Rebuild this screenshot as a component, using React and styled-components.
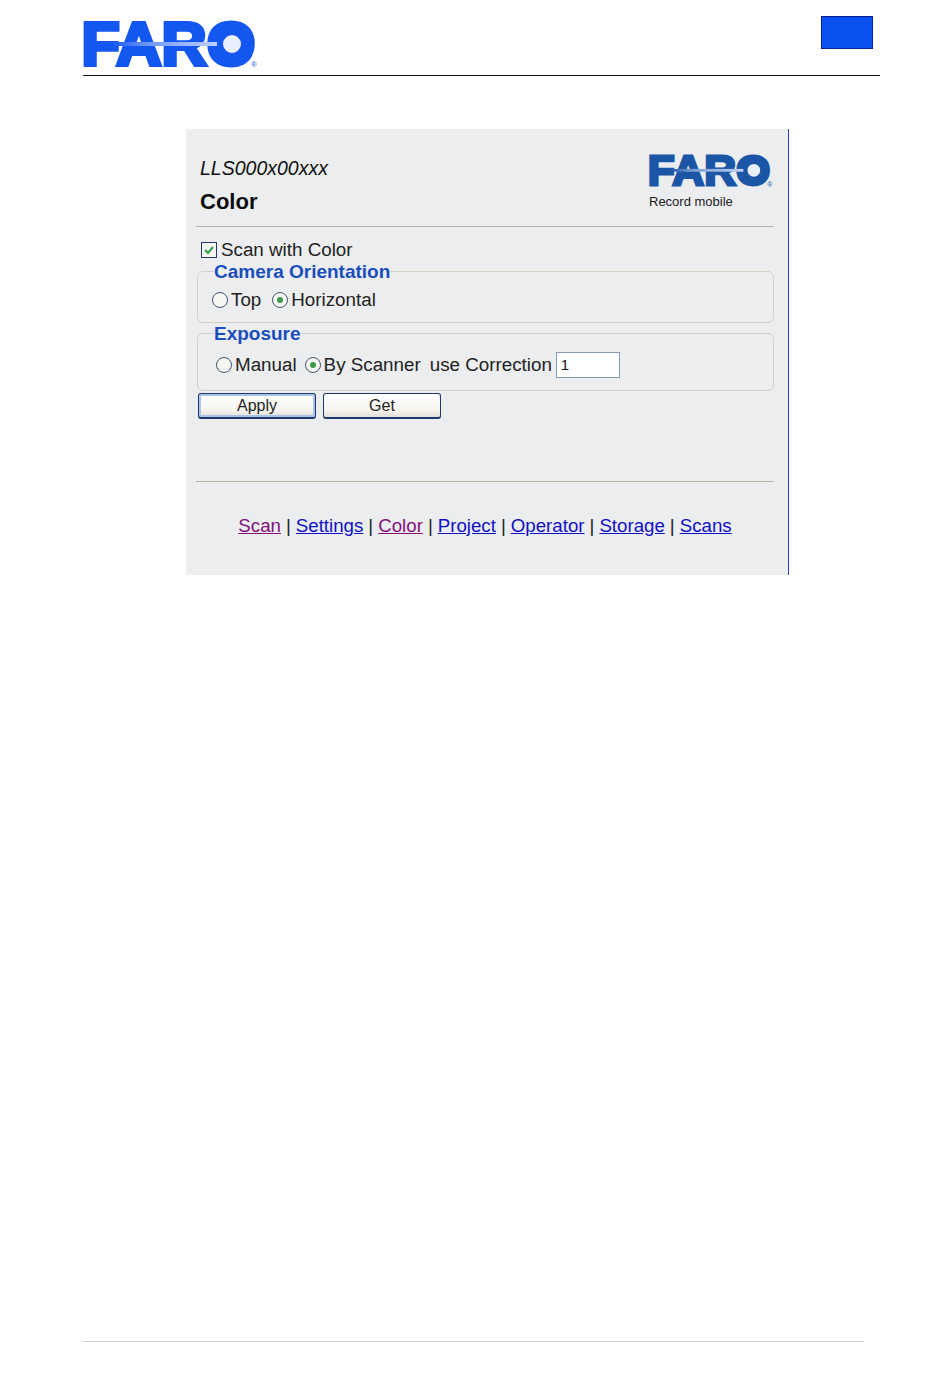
import React from "react";
import styled, { createGlobalStyle } from "styled-components";

const GlobalStyle = createGlobalStyle`
  html, body {
    margin: 0;
    padding: 0;
    background: #fff;
    font-family: "Liberation Sans", Arial, sans-serif;
  }
`;

const Page = styled.div`
  display: flex;
  flex-direction: column;
  width: 950px;
  height: 1379px;
  box-sizing: border-box;
`;
const Header = styled.header`
  display: flex;
  justify-content: space-between;
  align-items: flex-start;
  box-sizing: border-box;
  width: 797px;
  height: 76px;
  margin-left: 83px;
  border-bottom: 1px solid #111;
`;
const HeaderLogo = styled.div`
  margin: 18px 0 0 -4px;
  line-height: 0;
`;
const ChapterBox = styled.div`
  width: 52px;
  height: 33px;
  margin: 16px 7px 0 0;
  box-sizing: border-box;
  background: #0a52f0;
  border: 1px solid #0a1f90;
`;
const Panel = styled.main`
  align-self: flex-start;
  box-sizing: border-box;
  width: 603px;
  height: 446px;
  margin: 53px 0 0 186px;
  padding: 0 14px 0 10px;
  background: #ebedef;
  border-right: 1px solid #1d47c4;
`;
const PanelTop = styled.div`
  display: flex;
  justify-content: space-between;
  box-sizing: border-box;
  height: 98px;
  border-bottom: 1px solid #b5b2a6;
`;
const TitleBlock = styled.div`
  padding: 27px 0 0 4px;
`;
const Serial = styled.div`
  font-size: 19.5px;
  font-style: italic;
  line-height: 24px;
  color: #111;
`;
const PageTitle = styled.h1`
  margin: 10px 0 0;
  font-size: 22px;
  font-weight: 700;
  line-height: 24px;
  color: #0c0c0c;
`;
const Brand = styled.div`
  display: flex;
  flex-direction: column;
  width: 125px;
  padding-top: 23px;
  line-height: 0;
`;
const BrandLogo = styled.div`
  margin-left: -3px;
`;
const BrandCaption = styled.div`
  margin-top: 6px;
  font-size: 13px;
  line-height: 13px;
  color: #222;
`;
const ColorRow = styled.label`
  display: flex;
  align-items: center;
  gap: 4px;
  height: 23px;
  margin: 11px 0 0 5px;
  font-size: 18.8px;
  color: #222;
`;
const CheckBox = styled.span`
  display: flex;
  align-items: center;
  justify-content: center;
  box-sizing: border-box;
  width: 16px;
  height: 16px;
  background: #f4f6f2;
  border: 1px solid #24386a;
`;
const Group = styled.fieldset`
  box-sizing: border-box;
  width: 577px;
  height: ${(p) => p.$height}px;
  margin: 0 0 0 1px;
  padding: 0;
  border: 1px solid #d3d1c6;
  border-radius: 6px;
`;
const Legend = styled.legend`
  margin-left: 16px;
  padding: 0;
  font-size: 19px;
  font-weight: 700;
  line-height: 21px;
  color: #1a4dbd;
`;
const Options = styled.div`
  display: flex;
  align-items: center;
  height: ${(p) => p.$height}px;
  padding-left: ${(p) => p.$inset}px;
  font-size: 18.8px;
  color: #222;
`;
const Option = styled.span`
  display: flex;
  align-items: center;
  gap: 3px;
  margin-right: ${(p) => p.$gap}px;
`;
const Radio = styled.span`
  display: flex;
  align-items: center;
  justify-content: center;
  box-sizing: border-box;
  width: 16px;
  height: 16px;
  background: #f6f6f2;
  border: 1px solid #45556a;
  border-radius: 50%;
  &::after {
    content: "";
    display: ${(p) => (p.$on ? "block" : "none")};
    width: 6px;
    height: 6px;
    border-radius: 50%;
    background: #3d9a48;
  }
`;
const Correction = styled.span`
  margin-left: 9px;
`;
const ValueBox = styled.div`
  box-sizing: border-box;
  width: 64px;
  height: 26px;
  margin-left: 4px;
  padding-left: 4px;
  background: #fff;
  border: 1px solid #7f9db9;
  font-size: 15px;
  line-height: 24px;
  color: #111;
`;
const Buttons = styled.div`
  display: flex;
  gap: 7px;
  margin: 2px 0 0 2px;
`;
const Button = styled.button`
  box-sizing: border-box;
  width: 118px;
  height: 26px;
  padding: 0;
  background: linear-gradient(#ffffff, #f5f4ef 70%, #e2dfd6);
  border: 1px solid #1c3a6e;
  border-bottom-width: 2px;
  border-radius: 3px;
  box-shadow: ${(p) => (p.$primary ? "inset 0 0 0 2px #a9c3e8" : "none")};
  font-family: "Liberation Sans", Arial, sans-serif;
  font-size: 16px;
  color: #222;
`;
const BottomRule = styled.hr`
  width: 578px;
  height: 1px;
  margin: 62px 0 0;
  background: #b5b2a6;
  border: 0;
`;
const Nav = styled.nav`
  display: flex;
  justify-content: center;
  gap: 5px;
  margin-top: 32px;
  font-size: 18.7px;
  line-height: 24px;
  color: #222;
`;
const NavLink = styled.a`
  color: ${(p) => (p.$visited ? "#86107e" : "#1010c8")};
  text-decoration: underline;
`;
const FooterRule = styled.hr`
  width: 781px;
  height: 1px;
  margin: auto 0 37px 83px;
  background: #cfcfcf;
  border: 0;
`;

function FaroLogo({ scale, color, beam, mark }) {
  const id = "beam" + color.slice(1);
  return (
    <svg width={186 * scale} height={52 * scale} viewBox="-4 -2 186 52" aria-label="FARO">
      <defs>
        <linearGradient id={id} x1="0" x2="1" y1="0" y2="0">
          <stop offset="0" stopColor={color} />
          <stop offset="0.3" stopColor={beam} />
          <stop offset="1" stopColor="#c9d8fb" />
        </linearGradient>
      </defs>
      <text
        x="-1.4"
        y="44.5"
        textLength="173.7"
        lengthAdjust="spacingAndGlyphs"
        fontFamily="'Liberation Sans', Arial, sans-serif"
        fontWeight="700"
        fontSize="61"
        fill={color}
        stroke={color}
        strokeWidth="4"
      >
        FARO
      </text>
      <rect x="29" y="22" width="115" height="4" fill={`url(#${id})`} />
      <circle cx="149" cy="24" r="12" fill="#e9effd" stroke={color} strokeWidth="6" />
      <text x="168" y="47" fontFamily="'Liberation Sans', Arial, sans-serif" fontSize={mark} fill={color}>
        ®
      </text>
    </svg>
  );
}

export default function App() {
  return (
    <Page>
      <GlobalStyle />
      <Header>
        <HeaderLogo>
          <FaroLogo scale={1} color="#1457f0" beam="#6d97f6" mark={8} />
        </HeaderLogo>
        <ChapterBox />
      </Header>
      <Panel>
        <PanelTop>
          <TitleBlock>
            <Serial>LLS000x00xxx</Serial>
            <PageTitle>Color</PageTitle>
          </TitleBlock>
          <Brand>
            <BrandLogo>
              <FaroLogo scale={0.705} color="#1b56a6" beam="#7a9fd0" mark={10} />
            </BrandLogo>
            <BrandCaption>Record mobile</BrandCaption>
          </Brand>
        </PanelTop>
        <ColorRow>
          <CheckBox>
            <svg width="12" height="12" viewBox="0 0 12 12">
              <path d="M2 6l3 3 5-6" fill="none" stroke="#2f9e44" strokeWidth="2" />
            </svg>
          </CheckBox>
          Scan with Color
        </ColorRow>
        <Group $height={62}>
          <Legend>Camera Orientation</Legend>
          <Options $height={36} $inset={14}>
            <Option $gap={11}>
              <Radio />
              Top
            </Option>
            <Option $gap={0}>
              <Radio $on />
              Horizontal
            </Option>
          </Options>
        </Group>
        <Group $height={68}>
          <Legend>Exposure</Legend>
          <Options $height={42} $inset={18}>
            <Option $gap={8}>
              <Radio />
              Manual
            </Option>
            <Option $gap={0}>
              <Radio $on />
              By Scanner
            </Option>
            <Correction>use Correction</Correction>
            <ValueBox>1</ValueBox>
          </Options>
        </Group>
        <Buttons>
          <Button $primary>Apply</Button>
          <Button>Get</Button>
        </Buttons>
        <BottomRule />
        <Nav>
          <NavLink $visited>Scan</NavLink>|
          <NavLink>Settings</NavLink>|
          <NavLink $visited>Color</NavLink>|
          <NavLink>Project</NavLink>|
          <NavLink>Operator</NavLink>|
          <NavLink>Storage</NavLink>|
          <NavLink>Scans</NavLink>
        </Nav>
      </Panel>
      <FooterRule />
    </Page>
  );
}
